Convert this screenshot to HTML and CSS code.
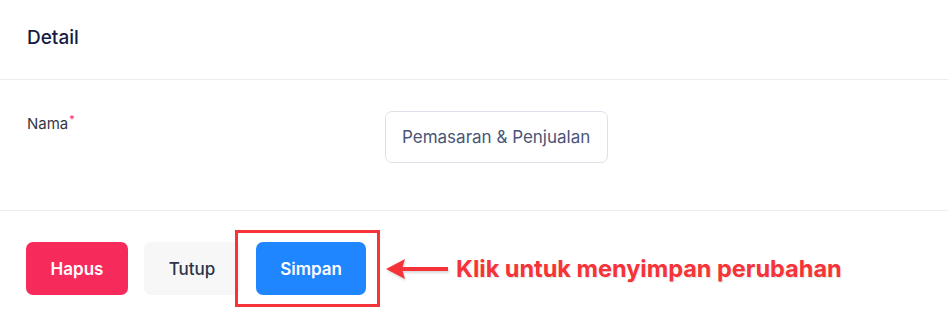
FILE: index.html
```html
<!DOCTYPE html>
<html lang="id">
<head>
<meta charset="utf-8">
<title>Detail</title>
<link rel="stylesheet" href="styles.css">
</head>
<body>
<div class="panel">
  <div class="header">Detail</div>
  <div class="body">
    <div class="field">
      <label class="label" for="nama">Nama<span class="req">*</span></label>
      <input id="nama" class="input" type="text" value="Pemasaran &amp; Penjualan">
    </div>
  </div>
  <div class="footer">
    <button class="btn btn-danger">Hapus</button>
    <button class="btn btn-light">Tutup</button>
    <div class="frame">
      <button class="btn btn-primary">Simpan</button>
    </div>
    <div class="note">
      <svg class="arrow" width="62" height="26" viewBox="0 0 62 26">
        <path d="M14 11 H62 V15 H14 Z" fill="#f53338"/>
        <path d="M0 13 L19 3 L16 13 L19 23 Z" fill="#f53338"/>
      </svg>
      <span class="note-text">Klik untuk menyimpan perubahan</span>
    </div>
  </div>
</div>
</body>
</html>
```
FILE: styles.css
```css
* { box-sizing: border-box; }
html, body { margin: 0; padding: 0; background: #ffffff; }
body { font-family: Inter, "Noto Sans", "Liberation Sans", sans-serif; }

.panel { width: 948px; }

.header {
  height: 80px;
  padding: 26px 27px 0;
  font-size: 19px;
  font-weight: 500;
  color: #141c45;
  border-bottom: 1px solid #ececef;
}

.body {
  height: 131px;
  padding: 31px 27px 0;
  border-bottom: 1px solid #ececef;
}

.field { display: flex; align-items: flex-start; }

.label {
  width: 358px;
  padding-top: 3px;
  font-size: 15px;
  color: #353844;
}
.req { color: #f72a5c; font-size: 11px; vertical-align: top; position: relative; top: -2px; margin-left: 1px; }

.input {
  width: 223px;
  height: 52px;
  padding: 0 16px;
  border: 1px solid #dfe1ea;
  border-radius: 7px;
  font-family: inherit;
  font-size: 17px;
  color: #4a5578;
  background: #fff;
  outline: none;
}

.footer {
  display: flex;
  gap: 16px;
  height: 107px;
  padding: 31px 26px 0;
  align-items: flex-start;
}

.btn {
  height: 53px;
  border: 0;
  border-radius: 7px;
  font-family: inherit;
  font-size: 17px;
  font-weight: 600;
  padding: 0;
  cursor: pointer;
  flex: none;
}
.btn-danger { width: 102px; background: #f72a5c; color: #fff; }
.btn-light { width: 96px; background: #f7f7f8; color: #2d3448; font-weight: 500; }
.btn-primary { width: 110px; background: #1f86ff; color: #fff; display: block; }

.frame {
  flex: none;
  margin: -12px -14px 0 -21px;
  padding: 9px 11px 9px 18px;
  border: 3px solid #f53338;
}

.note {
  display: flex;
  align-items: center;
  gap: 8px;
  height: 53px;
  margin-left: 4px;
  white-space: nowrap;
}
.arrow { display: block; filter: drop-shadow(1px 2px 1px rgba(0,0,0,0.15)); }
.note-text {
  font-size: 23.5px;
  font-weight: 700;
  color: #f53338;
  text-shadow: 1px 1px 1px rgba(0,0,0,0.12);
}
```
